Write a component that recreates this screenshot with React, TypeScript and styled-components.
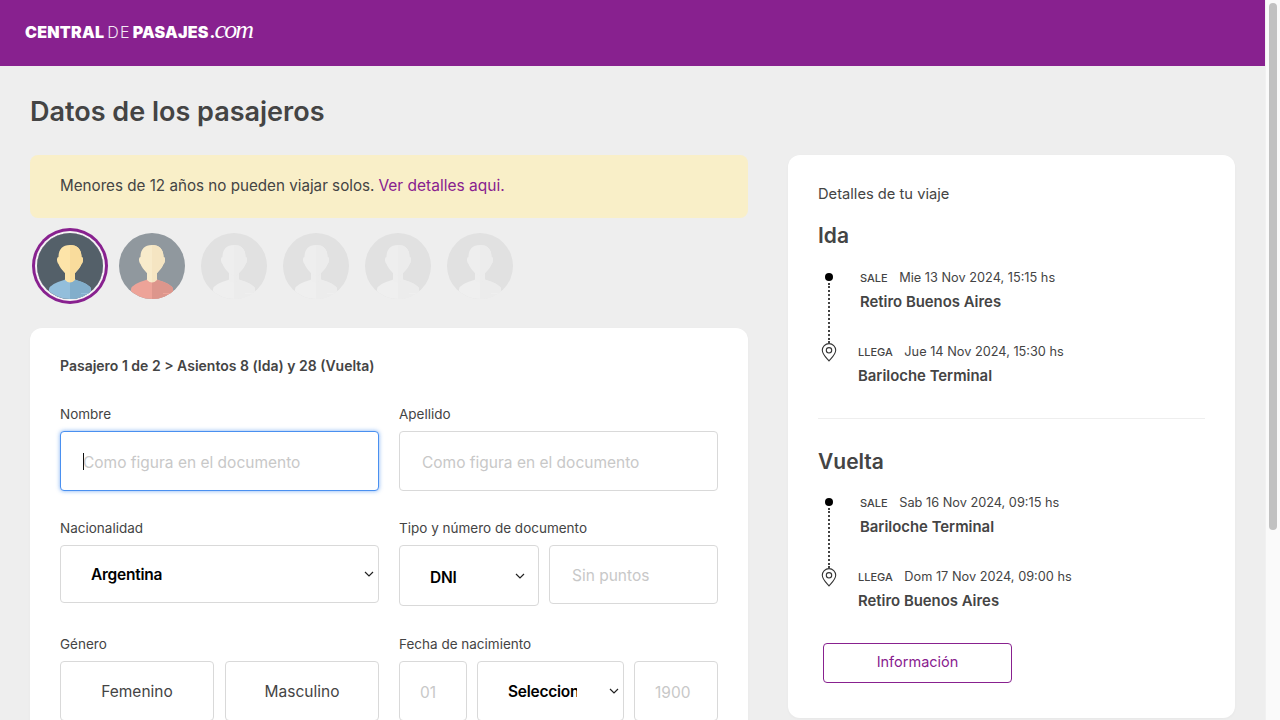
import { useId } from 'react';
import styled, { createGlobalStyle, css } from 'styled-components';

const purple = '#88218f';
const ink = '#444444';
const font = '"Inter", "Liberation Sans", sans-serif';
const chevron =
    "url(\"data:image/svg+xml,%3Csvg xmlns='http://www.w3.org/2000/svg' width='10' height='6' viewBox='0 0 10 6' fill='none' stroke='%23222' stroke-width='1.2'%3E%3Cpath d='M1 1l4 4 4-4'/%3E%3C/svg%3E\")";

const GlobalStyle = createGlobalStyle`
    body {
        margin: 0;
        background: #eeeeee;
        font-family: ${font};
        color: ${ink};
    }
    * { box-sizing: border-box; }
`;

/* ── Shell ── */

const Shell = styled.div`
    display: flex;
    height: 100vh;
    overflow: hidden;
`;

const Viewport = styled.div`
    flex: 1;
    min-width: 0;
`;

const ScrollTrack = styled.div`
    width: 15px;
    flex-shrink: 0;
    padding: 3px 3px 0 4px;
    background: #fafafa;
    border-left: 1px solid #f1f1f1;
`;

const ScrollThumb = styled.div`
    height: 527px;
    margin-left: -1px;
    background: #c1c1c1;
    border-radius: 4px;
`;

/* ── Header ── */

const Header = styled.header`
    height: 66px;
    background: ${purple};
    display: flex;
    align-items: center;
    padding: 0 0 4px 25px;
`;

const Logo = styled.div`
    display: flex;
    align-items: baseline;
    color: #fff;
    font-size: 16px;
    line-height: 1;
`;

const LogoBold = styled.span`
    font-weight: 900;
    letter-spacing: 0.25px;
`;

const LogoLight = styled.span`
    font-weight: 300;
    letter-spacing: 1.2px;
    margin: 0 2px 0 3px;
    opacity: 0.9;
`;

const LogoCom = styled.span`
    font-family: "Liberation Serif", serif;
    font-style: italic;
    font-size: 26px;
    line-height: 15px;
    letter-spacing: -1.8px;
    margin-left: 1px;
`;

/* ── Layout ── */

const Main = styled.main`
    padding: 30px 30px 0;
`;

const Title = styled.h1`
    margin: 0 0 28px;
    font-size: 27px;
    line-height: 31px;
    font-weight: 600;
    color: ${ink};
`;

const Columns = styled.div`
    display: grid;
    grid-template-columns: 718px 447px;
    column-gap: 40px;
    align-items: start;
`;

const Alert = styled.div`
    height: 63px;
    display: flex;
    align-items: center;
    padding: 0 0 2px 30px;
    background: #f9efc8;
    border-radius: 8px;
    font-size: 15.2px;
`;

const AlertLink = styled.a`
    color: ${purple};
    margin-left: 4px;
    font-size: 15.5px;
`;

const Avatars = styled.div`
    display: flex;
    gap: 16px;
    padding: 15px 0 0 7px;
    margin-bottom: 29px;
`;

const AvatarFrame = styled.div<{ $selected?: boolean }>`
    width: 66px;
    height: 66px;
    border-radius: 50%;
    ${p =>
        p.$selected &&
        css`
            box-shadow: 0 0 0 2px #f4f4f4, 0 0 0 5px ${purple};
        `}
`;

const Card = styled.section`
    background: #fff;
    border-radius: 12px;
    padding: 30px;
    box-shadow: 0 1px 3px rgba(0, 0, 0, 0.03);
`;

/* ── Form ── */

const FormTitle = styled.h2`
    margin: 0 0 32px;
    font-size: 14px;
    line-height: 16px;
    font-weight: 600;
    color: ${ink};
`;

const FormGrid = styled.div`
    display: grid;
    grid-template-columns: 319px 319px;
    grid-template-rows: 85px 87px auto;
    column-gap: 20px;
    row-gap: 29px;
    align-items: start;
`;

const Field = styled.div`
    display: flex;
    flex-direction: column;
    gap: 9px;
`;

const Label = styled.label`
    font-size: 13.5px;
    line-height: 16px;
    color: ${ink};
`;

const Controls = styled.div<{ $gap?: number }>`
    display: flex;
    gap: ${p => p.$gap ?? 10}px;
    align-items: flex-start;
`;

const InputWrap = styled.div`
    position: relative;
`;

const Caret = styled.span`
    position: absolute;
    left: 23px;
    top: 22px;
    width: 1px;
    height: 17px;
    background: #111;
`;

const controlBase = css`
    border: 1px solid #d9d9d9;
    border-radius: 4px;
    background-color: #fff;
    font-family: ${font};
    font-size: 15.5px;
    outline: none;
`;

const Input = styled.input<{ $height?: number; $width?: number; $pad?: number }>`
    ${controlBase}
    display: block;
    flex: ${p => (p.$width ? '0 0 auto' : '1 1 auto')};
    height: ${p => p.$height ?? 60}px;
    width: ${p => (p.$width ? `${p.$width}px` : '100%')};
    min-width: 0;
    padding: 2px 0 0 ${p => p.$pad ?? 22}px;
    color: ${ink};

    &::placeholder { color: #c8c8c8; }
    &:focus {
        border-color: #4a90f0;
        box-shadow: 0 0 4px rgba(74, 144, 240, 0.7);
    }
`;

const Select = styled.select<{ $height: number; $width?: number; $arrow?: number; $clip?: number; $top?: number }>`
    ${controlBase}
    flex-shrink: 0;
    appearance: none;
    -webkit-appearance: none;
    height: ${p => p.$height}px;
    width: ${p => (p.$width ? `${p.$width}px` : '100%')};
    padding: ${p => p.$top ?? 0}px ${p => p.$clip ?? 30}px 0 30px;
    font-weight: 600;
    letter-spacing: -0.25px;
    color: #000;
    background-image: ${chevron};
    background-repeat: no-repeat;
    background-position: right ${p => p.$arrow ?? 4}px center;
`;

const Choice = styled.button`
    ${controlBase}
    flex: 1;
    height: 60px;
    color: ${ink};
`;

/* ── Trip details ── */

const Aside = styled.aside`
    background: #fff;
    border-radius: 12px;
    padding: 30px;
    height: 563px;
    box-shadow: 0 1px 3px rgba(0, 0, 0, 0.03);
`;

const AsideTitle = styled.div`
    font-size: 14.7px;
    line-height: 18px;
    color: ${ink};
`;

const LegTitle = styled.h3`
    margin: 20px 0 19px;
    font-size: 21px;
    line-height: 26px;
    font-weight: 600;
    color: ${ink};

    &:first-of-type { margin-bottom: 20px; }
`;

const Stop = styled.div<{ $first?: boolean }>`
    display: flex;
    height: ${p => (p.$first ? 74 : 48)}px;
`;

const Marker = styled.div`
    width: 22px;
    flex-shrink: 0;
    display: flex;
    flex-direction: column;
    align-items: center;
`;

const Dot = styled.span`
    width: 8px;
    height: 8px;
    margin-top: 4px;
    border-radius: 50%;
    background: #000;
    flex-shrink: 0;
`;

const Dotted = styled.span`
    flex: 1;
    margin-top: 2px;
    border-left: 2px dotted #444;
`;

const StopBody = styled.div<{ $first?: boolean }>`
    margin-left: ${p => (p.$first ? 20 : 18)}px;
`;

const StopLine = styled.div`
    display: flex;
    align-items: baseline;
    gap: 11.5px;
    height: 18px;
    line-height: 18px;
    font-size: 12.75px;
`;

const StopTag = styled.span`
    font-size: 11px;
    font-weight: 500;
`;

const Station = styled.div`
    margin-top: 6px;
    font-size: 14.9px;
    line-height: 18px;
    font-weight: 600;
`;

const Divider = styled.hr`
    border: none;
    border-top: 1px solid #eeeeee;
    margin: 27px 0 30px;
`;

const InfoButton = styled.button`
    display: block;
    width: 189px;
    height: 40px;
    margin: 27px 0 0 5px;
    padding: 0 0 3px;
    border: 1px solid ${purple};
    border-radius: 4px;
    background: #fff;
    color: ${purple};
    font-family: ${font};
    font-size: 14.5px;
`;

/* ── Drawings ── */

const palettes = {
    blue: { bg: '#546069', face: '#fde4a9', faceDark: '#f9dc9c', shirt: '#93bedb', shirtDark: '#82aecb' },
    rose: { bg: '#90989e', face: '#f8ebcb', faceDark: '#f5e5c2', shirt: '#eda398', shirtDark: '#dd968c' },
    empty: { bg: '#e1e1e1', face: '#eeeeee', faceDark: '#ececec', shirt: '#efefef', shirtDark: '#ececec' },
};

const Avatar = ({ tone, selected }: { tone: keyof typeof palettes; selected?: boolean }) => {
    const id = useId();
    const c = palettes[tone];
    const body = 'M12 66V56Q13 51 27 47L29 46H37L39 47Q53 51 54 56V66Z';
    const neck = 'M28 36H38V47Q33 52 28 47Z';
    const head =
        'M33 12C25 12 21.500 17 21.500 24C19.500 24 19.500 29 21.500 31C23 35 27 39 29 41Q33 44 37 41C39 39 43 35 44.500 31C46.500 29 46.500 24 44.500 24C44.500 17 41 12 33 12Z';
    return (
        <AvatarFrame $selected={selected}>
            <svg width="66" height="66" viewBox="0 0 66 66">
                <defs>
                    <clipPath id={`${id}c`}>
                        <circle cx="33" cy="33" r="33" />
                    </clipPath>
                    <clipPath id={`${id}r`}>
                        <rect x="33" y="0" width="33" height="66" />
                    </clipPath>
                </defs>
                <g clipPath={`url(#${id}c)`}>
                    <rect width="66" height="66" fill={c.bg} />
                    <path d={body} fill={c.shirt} />
                    <path d={neck} fill={c.face} />
                    <path d={head} fill={c.face} />
                    <g clipPath={`url(#${id}r)`}>
                        <path d={body} fill={c.shirtDark} />
                        <path d={neck} fill={c.faceDark} />
                        <path d={head} fill={c.faceDark} />
                    </g>
                    <rect x="44" y="60" width="9" height="1" fill={c.shirt} />
                </g>
            </svg>
        </AvatarFrame>
    );
};

const PinIcon = () => (
    <svg width="16" height="19" viewBox="0 0 16 19" fill="none" stroke="#333" strokeWidth="1.1">
        <path d="M8 18C5 14.5 1.3 11.2 1.3 7.3a6.7 6.7 0 0 1 13.4 0C14.700 11.2 11 14.500 8 18Z" />
        <circle cx="8" cy="7.300" r="2.700" />
    </svg>
);

interface LegProps {
    title: string;
    saleDate: string;
    from: string;
    arriveDate: string;
    to: string;
}

const Leg = ({ title, saleDate, from, arriveDate, to }: LegProps) => (
    <>
        <LegTitle>{title}</LegTitle>
        <Stop $first>
            <Marker>
                <Dot />
                <Dotted />
            </Marker>
            <StopBody $first>
                <StopLine>
                    <StopTag>SALE</StopTag>
                    {saleDate}
                </StopLine>
                <Station>{from}</Station>
            </StopBody>
        </Stop>
        <Stop>
            <Marker>
                <PinIcon />
            </Marker>
            <StopBody>
                <StopLine>
                    <StopTag>LLEGA</StopTag>
                    {arriveDate}
                </StopLine>
                <Station>{to}</Station>
            </StopBody>
        </Stop>
    </>
);

export default function App() {
    return (
        <Shell>
            <GlobalStyle />
            <Viewport>
                <Header>
                    <Logo>
                        <LogoBold>CENTRAL</LogoBold>
                        <LogoLight>DE</LogoLight>
                        <LogoBold>PASAJES</LogoBold>
                        <LogoCom>.com</LogoCom>
                    </Logo>
                </Header>
                <Main>
                    <Title>Datos de los pasajeros</Title>
                    <Columns>
                        <div>
                            <Alert>
                                Menores de 12 años no pueden viajar solos.
                                <AlertLink>Ver detalles aqui.</AlertLink>
                            </Alert>
                            <Avatars>
                                <Avatar tone="blue" selected />
                                <Avatar tone="rose" />
                                <Avatar tone="empty" />
                                <Avatar tone="empty" />
                                <Avatar tone="empty" />
                                <Avatar tone="empty" />
                            </Avatars>
                            <Card>
                                <FormTitle>Pasajero 1 de 2 &gt; Asientos 8 (Ida) y 28 (Vuelta)</FormTitle>
                                <FormGrid>
                                    <Field>
                                        <Label>Nombre</Label>
                                        <InputWrap>
                                            <Input autoFocus placeholder="Como figura en el documento" />
                                            <Caret />
                                        </InputWrap>
                                    </Field>
                                    <Field>
                                        <Label>Apellido</Label>
                                        <Input placeholder="Como figura en el documento" />
                                    </Field>
                                    <Field>
                                        <Label>Nacionalidad</Label>
                                        <Select $height={58}>
                                            <option>Argentina</option>
                                        </Select>
                                    </Field>
                                    <Field>
                                        <Label>Tipo y número de documento</Label>
                                        <Controls>
                                            <Select $height={61} $width={140} $arrow={13} $top={3}>
                                                <option>DNI</option>
                                            </Select>
                                            <Input $height={59} placeholder="Sin puntos" />
                                        </Controls>
                                    </Field>
                                    <Field>
                                        <Label>Género</Label>
                                        <Controls $gap={11}>
                                            <Choice>Femenino</Choice>
                                            <Choice>Masculino</Choice>
                                        </Controls>
                                    </Field>
                                    <Field>
                                        <Label>Fecha de nacimiento</Label>
                                        <Controls>
                                            <Input $width={68} $pad={20} placeholder="01" />
                                            <Select $height={60} $width={147} $clip={46}>
                                                <option>Seleccionar</option>
                                            </Select>
                                            <Input $width={84} $pad={20} placeholder="1900" />
                                        </Controls>
                                    </Field>
                                </FormGrid>
                            </Card>
                        </div>
                        <Aside>
                            <AsideTitle>Detalles de tu viaje</AsideTitle>
                            <Leg
                                title="Ida"
                                saleDate="Mie 13 Nov 2024, 15:15 hs"
                                from="Retiro Buenos Aires"
                                arriveDate="Jue 14 Nov 2024, 15:30 hs"
                                to="Bariloche Terminal"
                            />
                            <Divider />
                            <Leg
                                title="Vuelta"
                                saleDate="Sab 16 Nov 2024, 09:15 hs"
                                from="Bariloche Terminal"
                                arriveDate="Dom 17 Nov 2024, 09:00 hs"
                                to="Retiro Buenos Aires"
                            />
                            <InfoButton>Información</InfoButton>
                        </Aside>
                    </Columns>
                </Main>
            </Viewport>
            <ScrollTrack>
                <ScrollThumb />
            </ScrollTrack>
        </Shell>
    );
}
